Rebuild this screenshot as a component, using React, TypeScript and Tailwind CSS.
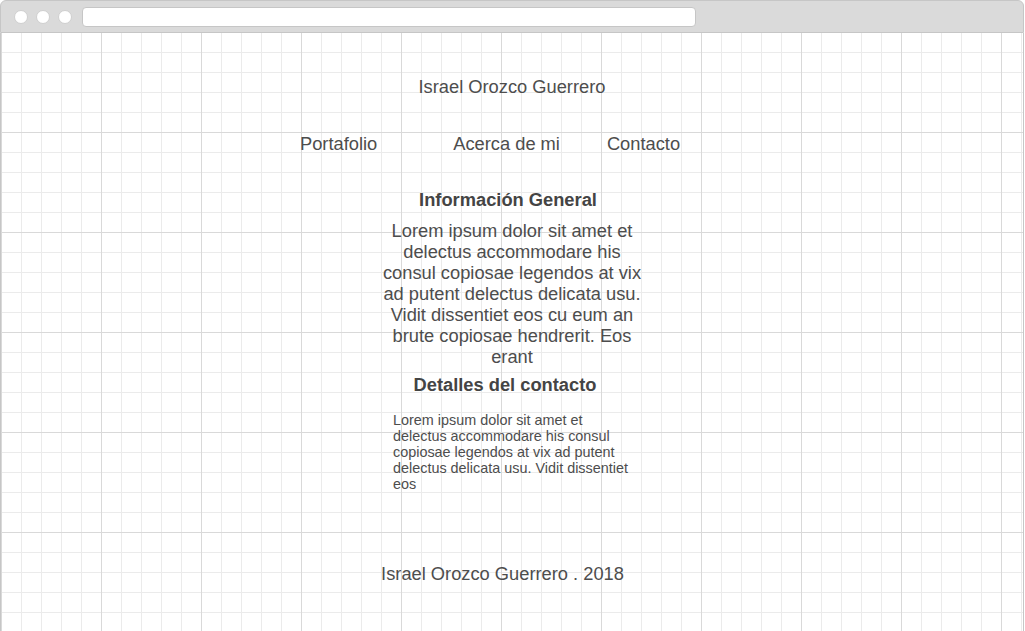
import React from "react";

function BrowserChrome() {
  return (
    <div className="flex h-[33px] items-center rounded-t-[6px] border border-[#c6c6c6] bg-[#dadada] pl-[13px]">
      <div className="flex gap-[8px]">
        <span className="h-[14px] w-[14px] rounded-full border border-[#cfcfcf] bg-white" />
        <span className="h-[14px] w-[14px] rounded-full border border-[#cfcfcf] bg-white" />
        <span className="h-[14px] w-[14px] rounded-full border border-[#cfcfcf] bg-white" />
      </div>
      <div className="ml-[10px] h-[20px] w-[614px] rounded-[4px] border border-[#c6c6c6] bg-white" />
    </div>
  );
}

export default function App() {
  return (
    <div
      className="h-[631px] w-[1025px] overflow-hidden bg-white text-[#4d4d4d]"
      style={{ fontFamily: '"Liberation Sans", Arial, sans-serif' }}
    >
      <div className="flex h-full w-[1024px] flex-col">
        <BrowserChrome />
        <div className="flex flex-1 flex-col border-x border-[#c6c6c6] bg-white bg-[linear-gradient(to_right,#d9d9d9_1px,transparent_1px),linear-gradient(to_bottom,transparent_99px,#d9d9d9_99px),linear-gradient(to_right,#ebebeb_1px,transparent_1px),linear-gradient(to_bottom,transparent_19px,#ebebeb_19px)] bg-size-[100px_100px,100px_100px,20px_20px,20px_20px]">
          <h1 className="pt-[43px] text-center text-[18.3px] leading-[21px]">
            Israel Orozco Guerrero
          </h1>

          <nav className="mt-[36px] flex pl-[299px] text-[18.3px] leading-[21px]">
            <a>Portafolio</a>
            <a className="ml-[76px]">Acerca de mi</a>
            <a className="ml-[47px]">Contacto</a>
          </nav>

          <main className="flex flex-col items-center">
            <h2 className="mt-[35px] mr-[8px] text-[18.3px] font-bold leading-[21px] text-[#444]">
              Información General
            </h2>
            <p className="mt-[10px] w-[264px] text-center text-[18.3px] leading-[21px]">
              Lorem ipsum dolor sit amet et delectus accommodare his consul
              copiosae legendos at vix ad putent delectus delicata usu. Vidit
              dissentiet eos cu eum an brute copiosae hendrerit. Eos erant
            </p>
            <h2 className="mt-[7px] mr-[14px] text-[18.3px] font-bold leading-[21px] text-[#444]">
              Detalles del contacto
            </h2>
            <p className="mt-[17px] w-[238px] text-left text-[14.4px] leading-[16px]">
              Lorem ipsum dolor sit amet et delectus accommodare his consul
              copiosae legendos at vix ad putent delectus delicata usu. Vidit
              dissentiet eos
            </p>
          </main>

          <footer className="mt-[71px] mr-[19px] text-center text-[18.3px] leading-[21px]">
            Israel Orozco Guerrero . 2018
          </footer>
        </div>
      </div>
    </div>
  );
}
